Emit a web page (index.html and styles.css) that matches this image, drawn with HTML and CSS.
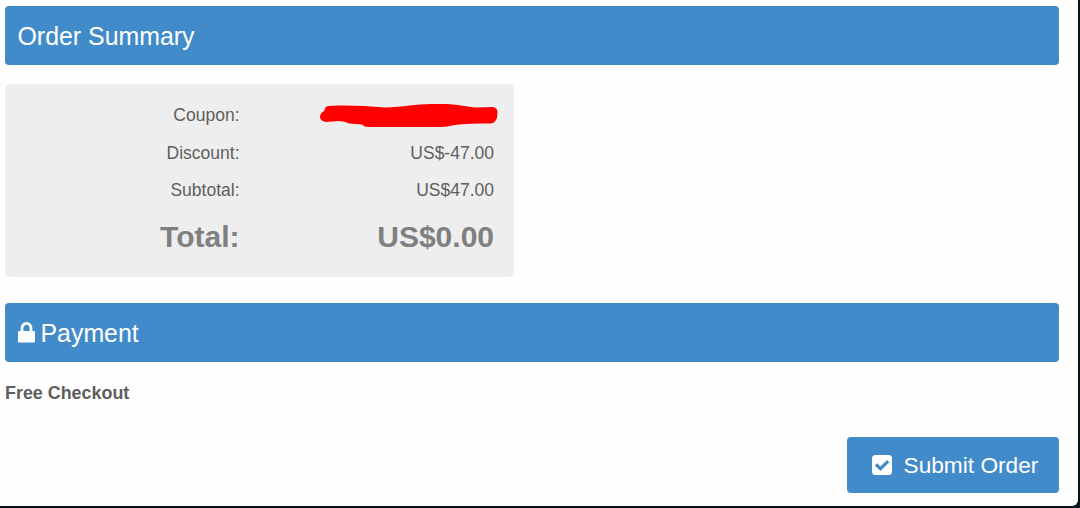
FILE: index.html
```html
<!DOCTYPE html>
<html lang="en">
<head>
    <meta charset="UTF-8">
    <meta name="viewport" content="width=device-width, initial-scale=1.0">
    <title>Checkout</title>
    <link rel="stylesheet" href="styles.css">
</head>
<body>
    <div class="container">
        <h2 class="section-title">Order Summary</h2>

        <div class="summary">
            <div class="summary-row">
                <span class="label">Coupon:</span>
                <span class="value">
                    <svg class="scribble" width="180" height="26" viewBox="0 0 180 26">
                        <path fill="#ff0000" d="M7 3.5 C20 1.500 46 3 66 4.500 C84 4 98 1 112 1 L124 1 C138 1 146 3.500 156 4.500 L174 4 Q178.500 5 178.500 9 L178 15 Q176 20 172 20.500 C154 20 136 21 128 23.500 Q122 24 114 24 L50 24 Q45 24 43 21.500 L30 20.500 Q26 18 20 18 L7 19 Q1 18 1 14 Q1 10 5 8 Z"/>
                    </svg>
                </span>
            </div>
            <div class="summary-row">
                <span class="label">Discount:</span>
                <span class="value">US$-47.00</span>
            </div>
            <div class="summary-row">
                <span class="label">Subtotal:</span>
                <span class="value">US$47.00</span>
            </div>
            <div class="summary-row total">
                <span class="label">Total:</span>
                <span class="value">US$0.00</span>
            </div>
        </div>

        <h2 class="section-title payment-title">
            <svg class="lock-icon" width="17" height="21" viewBox="0 0 17 21">
                <path fill="none" stroke="#fff" stroke-width="2.800" d="M4 10 V6.200 a4.500 4.800 0 0 1 9 0 V10"/>
                <rect x="0" y="9" width="17" height="11.500" rx="1.300" fill="#fff"/>
            </svg>
            Payment
        </h2>

        <p class="payment-method">Free Checkout</p>

        <div class="actions">
            <button class="submit-btn" type="button">
                <svg class="check-icon" width="20" height="20" viewBox="0 0 20 20">
                    <rect width="20" height="20" rx="3.500" fill="#fff"/>
                    <path fill="none" stroke="#428bca" stroke-width="3.200" d="M3.900 9.300 L8.500 13.700 L16.200 6.100"/>
                </svg>
                Submit Order
            </button>
        </div>
    </div>
</body>
</html>
```
FILE: styles.css
```css
* {
    box-sizing: border-box;
}
body {
    margin: 0;
    padding: 0 2px 2px 0;
    height: 508px;
    overflow: hidden;
    background-color: #07151b;
    color: #5e5e5e;
    font-family: "Liberation Sans", Arial, sans-serif;
    font-size: 17.5px;
}
.container {
    height: 506px;
    padding: 6px 19px 0 5px;
    background-color: #fefefe;
    border-bottom-right-radius: 6px;
}
.section-title {
    display: flex;
    align-items: center;
    height: 58.5px;
    margin: 0;
    padding: 3px 12.5px 0;
    border-radius: 4px;
    background-color: #428bca;
    color: #fff;
    font-size: 24.9px;
    font-weight: normal;
}
.payment-title {
    height: 59px;
}
.summary {
    width: 508.5px;
    height: 193px;
    margin: 19.5px 0 25.5px;
    padding: 13px 19.5px 0 0;
    border-radius: 5px;
    background-color: #eee;
}
.summary-row {
    display: flex;
    height: 37.5px;
    line-height: 37.5px;
}
.label {
    width: 234.5px;
    text-align: right;
}
.value {
    flex: 1;
    text-align: right;
}
.scribble {
    display: block;
    margin: 6px -5px 0 auto;
}
.total {
    height: 53px;
    line-height: 53px;
    color: #808080;
    font-size: 30px;
    font-weight: bold;
}
.lock-icon {
    margin: -3px 6px 0 0;
}
.payment-method {
    margin: 21.5px 0 0;
    line-height: 20px;
    font-size: 17.9px;
    font-weight: bold;
}
.actions {
    display: flex;
    justify-content: flex-end;
    margin-top: 34px;
}
.submit-btn {
    display: flex;
    align-items: center;
    width: 212px;
    height: 56px;
    padding: 0 0 0 25px;
    border: none;
    border-radius: 4px;
    background-color: #428bca;
    color: #fff;
    font-family: inherit;
    font-size: 22.7px;
    cursor: pointer;
}
.check-icon {
    margin-right: 11.5px;
}
```
